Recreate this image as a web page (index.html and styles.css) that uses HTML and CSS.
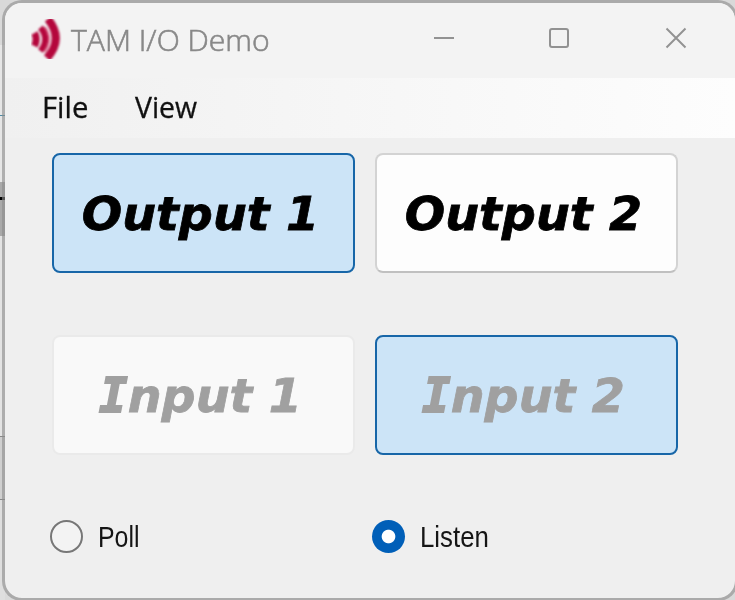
FILE: index.html
```html
<!DOCTYPE html>
<html lang="en">
<head>
<meta charset="utf-8">
<title>TAM I/O Demo</title>
<link rel="stylesheet" href="styles.css">
</head>
<body>
<div class="backdrop"></div>
<main class="window">
  <header class="titlebar">
    <svg class="logo" viewBox="0 0 34 42" width="34" height="42">
      <g fill="none" stroke="#b4063c">
        <path d="M3.500 15Q7 21 3.500 28" stroke-width="7"/>
        <path d="M9.500 9.500Q19 21 9.500 33" stroke-width="6"/>
        <path d="M17 1Q33 21 16 40" stroke-width="8"/>
        <path d="M14 9Q22 21 14 34" stroke-width="1.500" stroke="#d9547c"/>
      </g>
    </svg>
    <h1 class="title"><span>TAM I/O Demo</span></h1>
    <svg class="controls" viewBox="0 0 260 30" width="260" height="30" fill="none" stroke="#929292" stroke-width="2">
      <path d="M4 15H24"/>
      <rect x="120" y="6" width="18" height="18" rx="2"/>
      <path d="M236.500 5.500L255.500 24.500M255.500 5.500L236.500 24.500"/>
    </svg>
  </header>
  <nav class="menu"><span class="file">File</span><span class="view">View</span></nav>
  <section class="panel">
    <button class="tile on"><span>Output 1</span></button>
    <button class="tile"><span>Output 2</span></button>
    <button class="tile off"><span><i>I</i>nput 1</span></button>
    <button class="tile on dim"><span><i>I</i>nput 2</span></button>
  </section>
  <section class="modes">
    <label class="mode"><span class="radio"></span><span class="poll">Poll</span></label>
    <label class="mode"><span class="radio checked"></span><span class="listen">Listen</span></label>
  </section>
</main>
</body>
</html>
```
FILE: styles.css
```css
* { box-sizing: border-box; }
body {
  margin: 0;
  width: 735px;
  height: 600px;
  overflow: hidden;
  position: relative;
  background: #d9d9d9;
  font-family: "Open Sans", "Noto Sans", sans-serif;
}
/* Sliver of the window behind, seen at the left edge */
.backdrop {
  position: absolute;
  inset: 0 auto 0 0;
  width: 5px;
  background: linear-gradient(#d9d9d9 45px, #e6e6e6 45px 115px, #4e8ba5 115px 116px, #e6e6e6 116px 182px, #a9a9a9 182px 197px, #000 197px 200px, #a9a9a9 200px 236px, #e3e3e3 236px 436px, #888 436px 437px, #cfcfcf 437px 499px, #888 499px 500px, #dedede 500px);
}
.window {
  position: relative;
  margin-left: 2px;
  width: 736px;
  height: 601px;
  border: 3px solid rgba(140, 140, 140, .62);
  border-radius: 20px;
  background: #efefef;
  background-clip: padding-box;
  overflow: hidden;
}
.titlebar {
  height: 75px;
  display: flex;
  align-items: flex-start;
  background: #f3f3f3;
}
.logo {
  margin: 15px 0 0 26px;
  clip-path: inset(1px 0 1px 0);
}
.logo g { filter: blur(.8px); }
.title {
  margin: 17px 0 0 6px;
  width: 340px;
  font-size: 29.5px;
  line-height: 40px;
  font-weight: 300;
  color: #888;
  white-space: nowrap;
}
.title span {
  display: inline-block;
  transform: scaleX(1.022);
  transform-origin: 0 0;
  -webkit-text-stroke: .6px #888;
}
.controls { margin: 20px 0 0 19px; }
.menu {
  height: 60px;
  padding-left: 37px;
  display: flex;
  font-size: 29px;
  line-height: 58px;
  color: #111;
  background: linear-gradient(90deg, #f0f0f0, #fdfdfd);
  -webkit-text-stroke: .3px #111;
}
.menu span { width: 93px; transform-origin: 0 0; }
.file { transform: scaleX(1.01); }
.view { transform: scaleX(.98); }
.panel {
  padding: 15px 0 0 47px;
  display: grid;
  grid-template-columns: 303px 303px;
  grid-template-rows: 120px 120px;
  gap: 62px 20px;
}
.tile {
  padding: 1px 6px 0 0;
  border: 2px solid #d3d3d3;
  border-bottom-color: #c0c0c0;
  border-radius: 8px;
  background: #fdfdfd;
  color: #000;
  font: italic bold 47px/1 "DejaVu Sans", sans-serif;
  white-space: nowrap;
}
.tile span { display: block; transform: scaleX(1.012); -webkit-text-stroke: .8px currentColor; }
.tile i { font-family: "DejaVu Sans Mono", monospace; -webkit-text-stroke: 1.8px currentColor; }
.tile.on { border-color: #1766a8; background: #cce4f7; }
.tile.off { border-color: #eaeaea; background: #f9f9f9; color: #a0a0a0; }
.tile.dim { color: #a0a0a0; }
.modes {
  padding: 63px 0 0 45px;
  display: grid;
  grid-template-columns: 322px 322px;
}
.mode {
  display: flex;
  align-items: center;
  gap: 15px;
  height: 37px;
  font: 30px/37px "Liberation Sans", sans-serif;
  color: #151515;
}
.mode span { transform-origin: 0 50%; }
.radio {
  width: 33px;
  height: 33px;
  border: 2px solid #777;
  border-radius: 50%;
  background: #f3f3f3;
}
.radio.checked {
  border: 0;
  background: radial-gradient(circle, #fff 6.300px, #005fb8 7.300px);
}
.poll { transform: scaleX(.83); }
.listen { transform: scaleX(.86); }
```
